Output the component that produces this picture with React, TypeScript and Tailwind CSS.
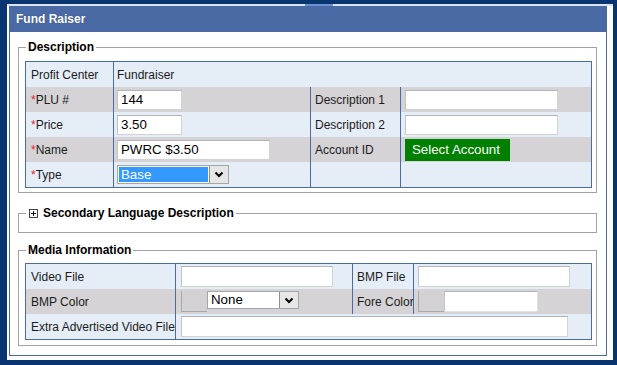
import type { ReactNode } from 'react'

const Req = ({ children }: { children: ReactNode }) => (
  <>
    <span className="text-[#e0262b]">*</span>
    {children}
  </>
)

function TextBox({ className, value }: { className: string; value?: string }) {
  return (
    <input
      readOnly
      defaultValue={value}
      className={`bg-white border border-[#d2d2d2] border-t-[#b4b4b4] border-l-[#c4c4c4] pl-[3px] text-[13.3px] text-black outline-none ${className}`}
    />
  )
}

function Chevron() {
  return (
    <svg width="10" height="7" viewBox="0 0 10 7">
      <path d="M1.5 1.5 L5 5 L8.5 1.5" fill="none" stroke="#000" strokeWidth="2" />
    </svg>
  )
}

function Select({ className, value, active }: { className: string; value: string; active?: boolean }) {
  return (
    <div className={`flex border border-[#a6a6a6] bg-white ${className}`}>
      <div
        className={
          active
            ? 'flex-1 m-px bg-[#3399ff] text-white text-[13.3px] leading-[15px] pl-[2px]'
            : 'flex-1 m-px bg-white text-black text-[13.3px] leading-[14px] pl-[2px]'
        }
      >
        {value}
      </div>
      <div className="w-[19px] border-l border-[#8e8e8e] bg-[#e6e6e6] flex items-center justify-center">
        <Chevron />
      </div>
    </div>
  )
}

function Swatch() {
  return <div className="w-[26px] h-[21px] border-l border-b border-[#a9a9a9] bg-[#d3d1d4]" />
}

const light = 'bg-[#e5edf6]'
const gray = 'bg-[#d5d3d6]'

export default function App() {
  return (
    <div className="w-[617px] h-[365px] bg-[#08346f] pl-[7px] pt-[4px] pr-[4px] pb-[5px] font-['Liberation_Sans',Arial,sans-serif]">
      <div className="relative h-full bg-white border-t-2 border-[#dbe3ee] pl-[2px] pr-[6px] pb-[4px]">
        <div className="absolute left-[298px] -top-[2px] w-[28px] h-[2px] bg-[#6b90d4]" />
        <div className="flex flex-col h-full border-x border-b border-[#4a6ba5]">
          <div className="h-[26px] shrink-0 bg-[#4a6aa5] flex items-center pl-[6px] text-[12px] font-bold text-white [text-shadow:0_0_1px_#2c4775]">
            Fund Raiser
          </div>

          {/* Description */}
          <fieldset className="mt-[8px] ml-[8px] w-[579px] border border-[#a3a3a3] pl-[6px] pr-[4px] pt-[7px] pb-[4px]">
            <legend className="ml-[1px] px-[2px] text-[12px] leading-[14px] font-bold text-black">Description</legend>
            <div className="border border-[#4a6ba5] text-[12px] text-[#1c1c1c]">
              <div className={`flex h-[25px] ${light}`}>
                <div className="w-[87px] pl-[5px] flex items-center">Profit Center</div>
                <div className="flex-1 border-l border-[#4a6ba5] pl-[3px] flex items-center">Fundraiser</div>
              </div>
              <div className={`flex h-[25px] ${gray}`}>
                <div className="w-[87px] pl-[5px] flex items-center">
                  <Req>PLU #</Req>
                </div>
                <div className="w-[197px] border-l border-[#4a6ba5] pl-[3px] flex items-center">
                  <TextBox className="w-[65px] h-[20px]" value="144" />
                </div>
                <div className="w-[90px] border-l border-[#4a6ba5] pl-[4px] flex items-center">Description 1</div>
                <div className="flex-1 border-l border-[#4a6ba5] pl-[4px] flex items-center">
                  <TextBox className="w-[153px] h-[20px]" />
                </div>
              </div>
              <div className={`flex h-[25px] ${light}`}>
                <div className="w-[87px] pl-[5px] flex items-center">
                  <Req>Price</Req>
                </div>
                <div className="w-[197px] border-l border-[#4a6ba5] pl-[3px] flex items-center">
                  <TextBox className="w-[65px] h-[20px]" value="3.50" />
                </div>
                <div className="w-[90px] border-l border-[#4a6ba5] pl-[4px] flex items-center">Description 2</div>
                <div className="flex-1 border-l border-[#4a6ba5] pl-[4px] flex items-center">
                  <TextBox className="w-[153px] h-[20px]" />
                </div>
              </div>
              <div className={`flex h-[25px] ${gray}`}>
                <div className="w-[87px] pl-[5px] flex items-center">
                  <Req>Name</Req>
                </div>
                <div className="w-[197px] border-l border-[#4a6ba5] pl-[3px] flex items-center">
                  <TextBox className="w-[153px] h-[20px]" value="PWRC $3.50" />
                </div>
                <div className="w-[90px] border-l border-[#4a6ba5] pl-[4px] flex items-center">Account ID</div>
                <div className="flex-1 border-l border-[#4a6ba5] pl-[4px] flex items-center">
                  <button className="w-[105px] h-[22px] bg-[#008000] text-white text-[13.3px] pl-[7px] text-left">
                    Select Account
                  </button>
                </div>
              </div>
              <div className={`flex h-[25px] ${light}`}>
                <div className="w-[87px] pl-[5px] flex items-center">
                  <Req>Type</Req>
                </div>
                <div className="w-[197px] border-l border-[#4a6ba5] pl-[3px] flex items-center">
                  <Select className="w-[112px] h-[19px]" value="Base" active />
                </div>
                <div className="w-[90px] border-l border-[#4a6ba5]" />
                <div className="flex-1 border-l border-[#4a6ba5]" />
              </div>
            </div>
          </fieldset>

          {/* Secondary language */}
          <fieldset className="mt-[13px] ml-[8px] w-[579px] border border-[#a3a3a3] pl-[6px] pr-[4px] pb-[12px]">
            <legend className="ml-[1px] px-[2px] text-[12px] leading-[14px] font-bold text-black">
              <span className="flex items-center">
                <span className="ml-[1px] mr-[5px] w-[9px] h-[9px] border border-[#444] bg-white flex items-center justify-center">
                  <svg width="7" height="7" viewBox="0 0 7 7">
                    <path d="M1 3.5 H6 M3.5 1 V6" stroke="#111" strokeWidth="1" />
                  </svg>
                </span>
                Secondary Language Description
              </span>
            </legend>
          </fieldset>

          {/* Media */}
          <fieldset className="mt-[10px] ml-[8px] w-[579px] border border-[#a3a3a3] pl-[6px] pr-[4px] pt-[6px] pb-[5px]">
            <legend className="ml-[1px] px-[2px] text-[12px] leading-[14px] font-bold text-black">Media Information</legend>
            <div className="border border-[#4a6ba5] text-[12px] text-[#1c1c1c]">
              <div className={`flex h-[25px] ${light}`}>
                <div className="w-[149px] pl-[5px] flex items-center">Video File</div>
                <div className="w-[177px] border-l border-[#4a6ba5] pl-[5px] flex items-center">
                  <TextBox className="w-[152px] h-[21px]" />
                </div>
                <div className="w-[61px] border-l border-[#4a6ba5] pl-[4px] flex items-center">BMP File</div>
                <div className="flex-1 border-l border-[#4a6ba5] pl-[4px] flex items-center">
                  <TextBox className="w-[152px] h-[21px]" />
                </div>
              </div>
              <div className={`flex h-[25px] ${gray}`}>
                <div className="w-[149px] pl-[5px] flex items-center">BMP Color</div>
                <div className="w-[177px] border-l border-[#4a6ba5] pl-[5px] flex items-center">
                  <Swatch />
                  <Select className="w-[92px] h-[18px] -mt-[3px]" value="None" />
                </div>
                <div className="w-[61px] border-l border-[#4a6ba5] pl-[4px] flex items-center overflow-hidden whitespace-nowrap">
                  Fore Color
                </div>
                <div className="flex-1 border-l border-[#4a6ba5] pl-[4px] flex items-center">
                  <Swatch />
                  <TextBox className="w-[94px] h-[21px] border-[#e2e2e2]" />
                </div>
              </div>
              <div className={`flex h-[25px] ${light}`}>
                <div className="w-[149px] pl-[5px] flex items-center whitespace-nowrap">Extra Advertised Video File</div>
                <div className="flex-1 border-l border-[#4a6ba5] pl-[5px] flex items-center">
                  <TextBox className="w-[387px] h-[21px]" />
                </div>
              </div>
            </div>
          </fieldset>
        </div>
      </div>
    </div>
  )
}
